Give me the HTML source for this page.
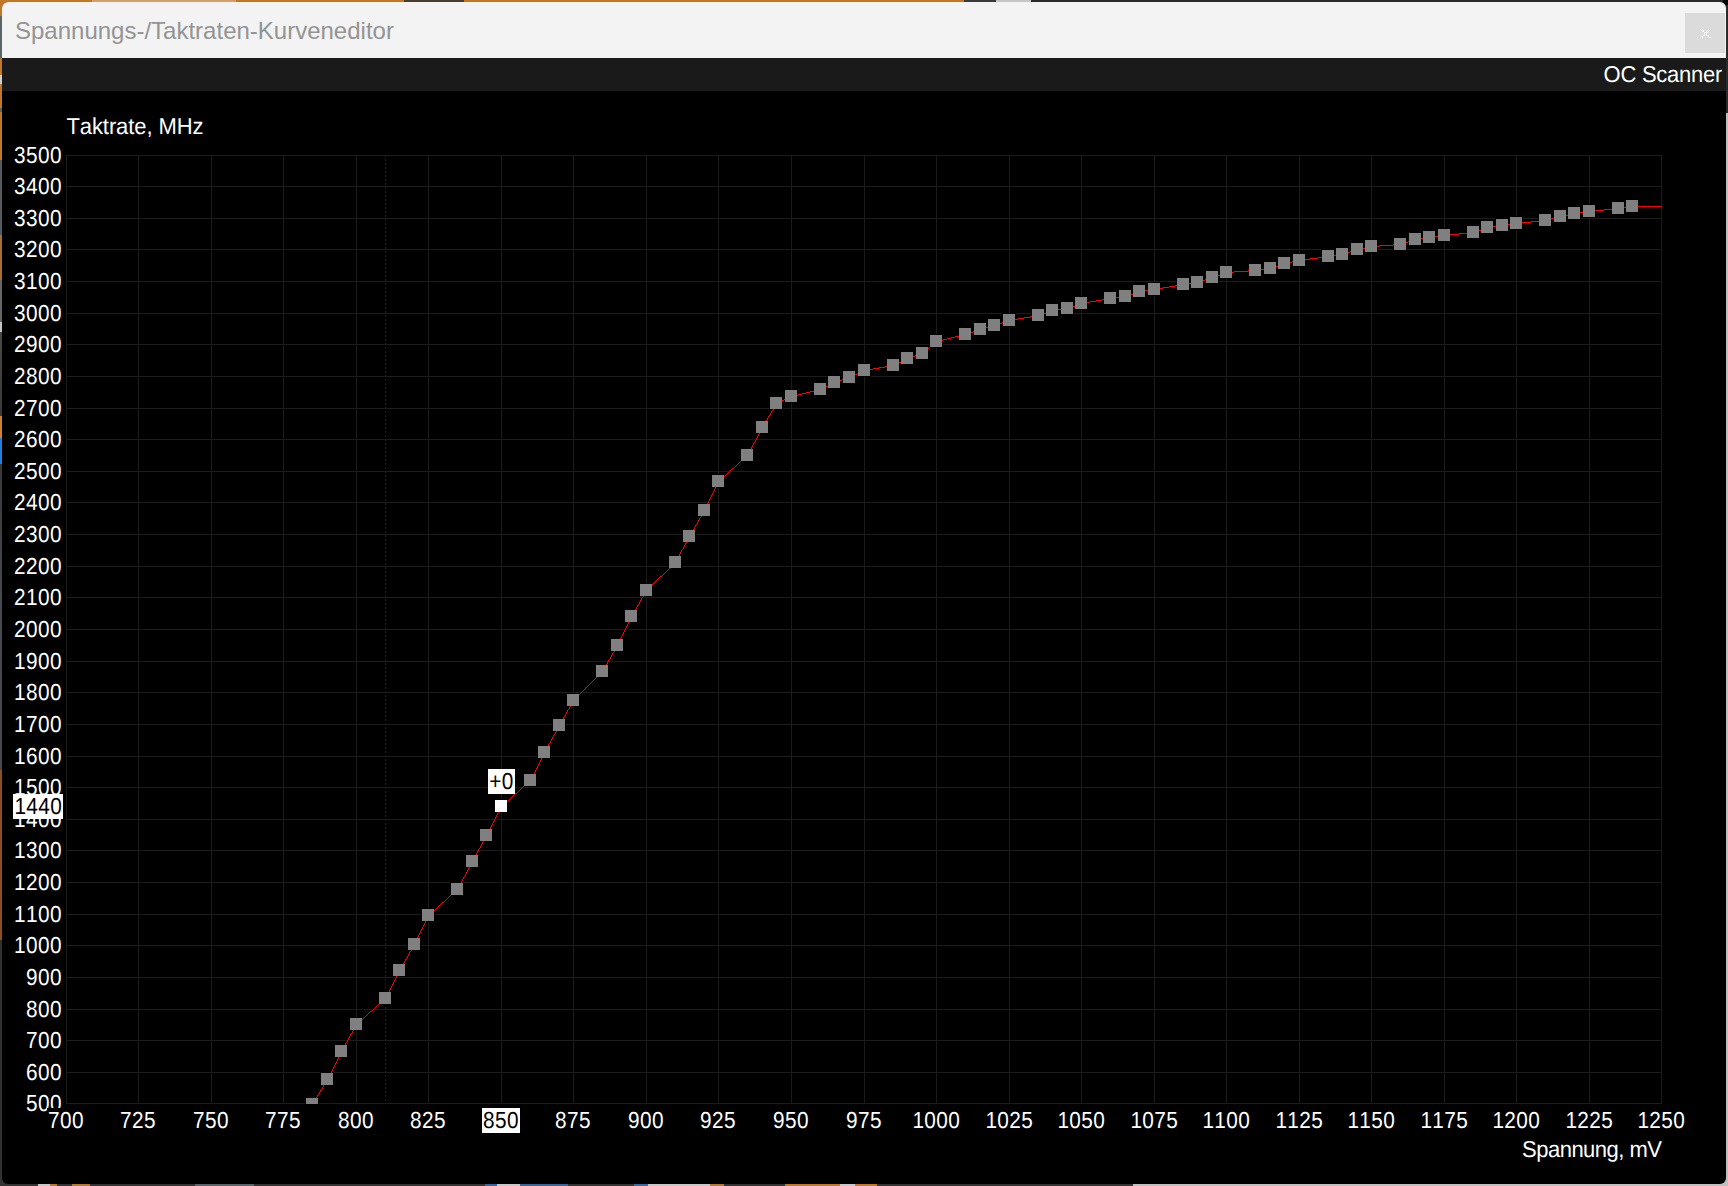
<!DOCTYPE html>
<html lang="de">
<head>
<meta charset="utf-8">
<title>Spannungs-/Taktraten-Kurveneditor</title>
<style>
html,body{margin:0;padding:0;background:#333333;}
body{width:1728px;height:1186px;overflow:hidden;position:relative;background:#333333;
font-family:"Liberation Sans",Arial,sans-serif;font-size:22px;line-height:25px;color:#fff;font-kerning:none;text-rendering:geometricPrecision;}
.s{display:block;transform:scaleY(1.056);transform-origin:0 20px;letter-spacing:-0.23px;}
.d{transform:scale(0.945,1.056);letter-spacing:0.46px;}
.yl .d{transform-origin:100% 20px;}
.xl .d,.sel .d{transform-origin:50% 20px;}
.w{transform:scaleY(1.045);}
#bg-top{position:absolute;left:0;top:0;width:1728px;height:12px;
background:linear-gradient(90deg,#c07828 0,#c07828 92px,#d2a06a 92px,#d2a06a 236px,#c07828 236px,#c07828 404px,#4a3c30 404px,#4a3c30 464px,#c07828 464px,#c07828 964px,#3a3a3a 964px,#3a3a3a 996px,#c6c6c6 996px,#c6c6c6 1031px,#2a2a2a 1031px,#2a2a2a 100%);}
#bg-left{position:absolute;left:0;top:0;width:12px;height:1186px;
background:linear-gradient(180deg,#c07828 0,#c07828 16px,#5a6468 16px,#5a6468 58px,#c07828 58px,#c07828 75px,#d0d0d0 75px,#d0d0d0 84px,#c07828 84px,#c07828 108px,#5a6468 108px,#5a6468 112px,#c07828 112px,#c07828 160px,#555a5c 160px,#555a5c 235px,#a87030 235px,#a87030 280px,#686664 280px,#686664 322px,#c4c4c4 322px,#c4c4c4 332px,#4a4846 332px,#3c3836 416px,#d08030 416px,#d08030 438px,#2080e0 438px,#2080e0 464px,#3a3836 464px,#454a50 600px,#454a50 770px,#8c4e24 770px,#8c4e24 940px,#303030 940px,#303030 100%);}
#bg-right{position:absolute;left:1716px;top:0;width:12px;height:1186px;
background:linear-gradient(180deg,#2a2a2a 0,#2a2a2a 113px,#bdbdbd 113px,#bdbdbd 100%);}
#bg-bottom{position:absolute;left:0;top:1174px;width:1728px;height:12px;
background:linear-gradient(90deg,#333 0,#333 38px,#c8c8c8 38px,#c8c8c8 50px,#b07a30 50px,#b07a30 57px,#333 57px,#333 72px,#b07a30 72px,#b07a30 90px,#333 90px,#333 195px,#5a6468 195px,#5a6468 254px,#333 254px,#333 485px,#38669a 485px,#38669a 497px,#c8c8c8 497px,#c8c8c8 520px,#38669a 520px,#38669a 568px,#333 568px,#333 634px,#3a6aa0 634px,#3a6aa0 648px,#c8c8c8 648px,#c8c8c8 710px,#b07a30 710px,#b07a30 724px,#333 724px,#333 785px,#c07828 785px,#c07828 840px,#c8c8c8 840px,#c8c8c8 855px,#c07828 855px,#c07828 877px,#333 877px,#333 1133px,#c0c0c0 1133px,#c0c0c0 100%);}
#win{position:absolute;left:2px;top:2px;width:1724px;height:1182px;border-radius:6px;background:#000;overflow:hidden;}
#titlebar{position:absolute;left:0;top:0;width:1724px;height:56px;background:#f3f3f3;}
#title{position:absolute;left:13px;top:15px;font-size:24px;line-height:28px;color:#949494;white-space:nowrap;font-kerning:normal;text-rendering:auto;}
#close{position:absolute;left:1683px;top:11px;width:40px;height:40px;background:#dbdbdb;}
#close svg{position:absolute;left:0;top:0;}
#toolbar{position:absolute;left:0;top:56px;width:1724px;height:33px;background:#1a1a1a;}
#oc{position:absolute;left:1601.6px;top:4px;white-space:nowrap;}
#chart{position:absolute;left:0;top:0;}
.t{position:absolute;white-space:nowrap;}
.yl{position:absolute;left:0;width:62px;height:25px;text-align:right;white-space:nowrap;}
.xl{position:absolute;top:1108px;height:25px;text-align:center;white-space:nowrap;background:#000;}
.sel{position:absolute;height:25px;background:#fff;color:#000;text-align:center;white-space:nowrap;}
</style>
</head>
<body>
<div id="bg-top"></div><div id="bg-left"></div><div id="bg-right"></div><div id="bg-bottom"></div>
<div style="position:absolute;left:1723px;top:0;width:5px;height:5px;background:#000"></div>
<div id="win">
<div id="titlebar"><div id="title">Spannungs-/Taktraten-Kurveneditor</div>
<div id="close"><svg width="40" height="40" viewBox="0 0 40 40"><path d="M15 16h1v1h-1zM17 16h1v1h-1zM23 16h1v1h-1zM25 16h1v1h-1zM16 17h1v1h-1zM17 17h1v1h-1zM18 17h1v1h-1zM22 17h1v1h-1zM24 17h1v1h-1zM17 18h1v1h-1zM18 18h1v1h-1zM21 18h1v1h-1zM23 18h1v1h-1zM19 19h1v1h-1zM20 19h1v1h-1zM21 19h1v1h-1zM22 19h1v1h-1zM19 20h1v1h-1zM21 20h1v1h-1zM19 21h1v1h-1zM21 21h1v1h-1zM18 22h1v1h-1zM19 22h1v1h-1zM21 22h1v1h-1zM22 22h1v1h-1zM23 22h1v1h-1zM16 23h1v1h-1zM17 23h1v1h-1zM23 23h1v1h-1zM15 24h1v1h-1zM17 24h1v1h-1zM24 24h1v1h-1zM25 24h1v1h-1z" fill="#f6f6f6" shape-rendering="crispEdges"/></svg></div></div>
<div id="toolbar"><div id="oc"><span class="s w" style="letter-spacing:-0.27px">OC Scanner</span></div></div>
</div>
<svg id="chart" width="1728" height="1186" viewBox="0 0 1728 1186" shape-rendering="crispEdges"><defs><clipPath id="cp"><rect x="66" y="155" width="1596" height="949"/></clipPath></defs><path fill="#1c1c1c" fill-rule="nonzero" d="M66 155h1v949h-1zM138 155h1v949h-1zM211 155h1v949h-1zM283 155h1v949h-1zM356 155h1v949h-1zM428 155h1v949h-1zM501 155h1v949h-1zM573 155h1v949h-1zM646 155h1v949h-1zM718 155h1v949h-1zM791 155h1v949h-1zM864 155h1v949h-1zM936 155h1v949h-1zM1009 155h1v949h-1zM1081 155h1v949h-1zM1154 155h1v949h-1zM1226 155h1v949h-1zM1299 155h1v949h-1zM1371 155h1v949h-1zM1444 155h1v949h-1zM1516 155h1v949h-1zM1589 155h1v949h-1zM1661 155h1v949h-1zM66 155h1596v1h-1596zM66 186h1596v1h-1596zM66 218h1596v1h-1596zM66 249h1596v1h-1596zM66 281h1596v1h-1596zM66 313h1596v1h-1596zM66 344h1596v1h-1596zM66 376h1596v1h-1596zM66 408h1596v1h-1596zM66 439h1596v1h-1596zM66 471h1596v1h-1596zM66 502h1596v1h-1596zM66 534h1596v1h-1596zM66 566h1596v1h-1596zM66 597h1596v1h-1596zM66 629h1596v1h-1596zM66 661h1596v1h-1596zM66 692h1596v1h-1596zM66 724h1596v1h-1596zM66 756h1596v1h-1596zM66 787h1596v1h-1596zM66 819h1596v1h-1596zM66 850h1596v1h-1596zM66 882h1596v1h-1596zM66 914h1596v1h-1596zM66 945h1596v1h-1596zM66 977h1596v1h-1596zM66 1009h1596v1h-1596zM66 1040h1596v1h-1596zM66 1072h1596v1h-1596zM66 1103h1596v1h-1596z"/><path fill="#5a0000" d="M385 155h1v2h-1zM385 159h1v2h-1zM385 163h1v2h-1zM385 167h1v2h-1zM385 171h1v2h-1zM385 175h1v2h-1zM385 179h1v2h-1zM385 183h1v2h-1zM385 187h1v2h-1zM385 191h1v2h-1zM385 195h1v2h-1zM385 199h1v2h-1zM385 203h1v2h-1zM385 207h1v2h-1zM385 211h1v2h-1zM385 215h1v2h-1zM385 219h1v2h-1zM385 223h1v2h-1zM385 227h1v2h-1zM385 231h1v2h-1zM385 235h1v2h-1zM385 239h1v2h-1zM385 243h1v2h-1zM385 247h1v2h-1zM385 251h1v2h-1zM385 255h1v2h-1zM385 259h1v2h-1zM385 263h1v2h-1zM385 267h1v2h-1zM385 271h1v2h-1zM385 275h1v2h-1zM385 279h1v2h-1zM385 283h1v2h-1zM385 287h1v2h-1zM385 291h1v2h-1zM385 295h1v2h-1zM385 299h1v2h-1zM385 303h1v2h-1zM385 307h1v2h-1zM385 311h1v2h-1zM385 315h1v2h-1zM385 319h1v2h-1zM385 323h1v2h-1zM385 327h1v2h-1zM385 331h1v2h-1zM385 335h1v2h-1zM385 339h1v2h-1zM385 343h1v2h-1zM385 347h1v2h-1zM385 351h1v2h-1zM385 355h1v2h-1zM385 359h1v2h-1zM385 363h1v2h-1zM385 367h1v2h-1zM385 371h1v2h-1zM385 375h1v2h-1zM385 379h1v2h-1zM385 383h1v2h-1zM385 387h1v2h-1zM385 391h1v2h-1zM385 395h1v2h-1zM385 399h1v2h-1zM385 403h1v2h-1zM385 407h1v2h-1zM385 411h1v2h-1zM385 415h1v2h-1zM385 419h1v2h-1zM385 423h1v2h-1zM385 427h1v2h-1zM385 431h1v2h-1zM385 435h1v2h-1zM385 439h1v2h-1zM385 443h1v2h-1zM385 447h1v2h-1zM385 451h1v2h-1zM385 455h1v2h-1zM385 459h1v2h-1zM385 463h1v2h-1zM385 467h1v2h-1zM385 471h1v2h-1zM385 475h1v2h-1zM385 479h1v2h-1zM385 483h1v2h-1zM385 487h1v2h-1zM385 491h1v2h-1zM385 495h1v2h-1zM385 499h1v2h-1zM385 503h1v2h-1zM385 507h1v2h-1zM385 511h1v2h-1zM385 515h1v2h-1zM385 519h1v2h-1zM385 523h1v2h-1zM385 527h1v2h-1zM385 531h1v2h-1zM385 535h1v2h-1zM385 539h1v2h-1zM385 543h1v2h-1zM385 547h1v2h-1zM385 551h1v2h-1zM385 555h1v2h-1zM385 559h1v2h-1zM385 563h1v2h-1zM385 567h1v2h-1zM385 571h1v2h-1zM385 575h1v2h-1zM385 579h1v2h-1zM385 583h1v2h-1zM385 587h1v2h-1zM385 591h1v2h-1zM385 595h1v2h-1zM385 599h1v2h-1zM385 603h1v2h-1zM385 607h1v2h-1zM385 611h1v2h-1zM385 615h1v2h-1zM385 619h1v2h-1zM385 623h1v2h-1zM385 627h1v2h-1zM385 631h1v2h-1zM385 635h1v2h-1zM385 639h1v2h-1zM385 643h1v2h-1zM385 647h1v2h-1zM385 651h1v2h-1zM385 655h1v2h-1zM385 659h1v2h-1zM385 663h1v2h-1zM385 667h1v2h-1zM385 671h1v2h-1zM385 675h1v2h-1zM385 679h1v2h-1zM385 683h1v2h-1zM385 687h1v2h-1zM385 691h1v2h-1zM385 695h1v2h-1zM385 699h1v2h-1zM385 703h1v2h-1zM385 707h1v2h-1zM385 711h1v2h-1zM385 715h1v2h-1zM385 719h1v2h-1zM385 723h1v2h-1zM385 727h1v2h-1zM385 731h1v2h-1zM385 735h1v2h-1zM385 739h1v2h-1zM385 743h1v2h-1zM385 747h1v2h-1zM385 751h1v2h-1zM385 755h1v2h-1zM385 759h1v2h-1zM385 763h1v2h-1zM385 767h1v2h-1zM385 771h1v2h-1zM385 775h1v2h-1zM385 779h1v2h-1zM385 783h1v2h-1zM385 787h1v2h-1zM385 791h1v2h-1zM385 795h1v2h-1zM385 799h1v2h-1zM385 803h1v2h-1zM385 807h1v2h-1zM385 811h1v2h-1zM385 815h1v2h-1zM385 819h1v2h-1zM385 823h1v2h-1zM385 827h1v2h-1zM385 831h1v2h-1zM385 835h1v2h-1zM385 839h1v2h-1zM385 843h1v2h-1zM385 847h1v2h-1zM385 851h1v2h-1zM385 855h1v2h-1zM385 859h1v2h-1zM385 863h1v2h-1zM385 867h1v2h-1zM385 871h1v2h-1zM385 875h1v2h-1zM385 879h1v2h-1zM385 883h1v2h-1zM385 887h1v2h-1zM385 891h1v2h-1zM385 895h1v2h-1zM385 899h1v2h-1zM385 903h1v2h-1zM385 907h1v2h-1zM385 911h1v2h-1zM385 915h1v2h-1zM385 919h1v2h-1zM385 923h1v2h-1zM385 927h1v2h-1zM385 931h1v2h-1zM385 935h1v2h-1zM385 939h1v2h-1zM385 943h1v2h-1zM385 947h1v2h-1zM385 951h1v2h-1zM385 955h1v2h-1zM385 959h1v2h-1zM385 963h1v2h-1zM385 967h1v2h-1zM385 971h1v2h-1zM385 975h1v2h-1zM385 979h1v2h-1zM385 983h1v2h-1zM385 987h1v2h-1zM385 991h1v2h-1zM385 995h1v2h-1zM385 999h1v2h-1zM385 1003h1v2h-1zM385 1007h1v2h-1zM385 1011h1v2h-1zM385 1015h1v2h-1zM385 1019h1v2h-1zM385 1023h1v2h-1zM385 1027h1v2h-1zM385 1031h1v2h-1zM385 1035h1v2h-1zM385 1039h1v2h-1zM385 1043h1v2h-1zM385 1047h1v2h-1zM385 1051h1v2h-1zM385 1055h1v2h-1zM385 1059h1v2h-1zM385 1063h1v2h-1zM385 1067h1v2h-1zM385 1071h1v2h-1zM385 1075h1v2h-1zM385 1079h1v2h-1zM385 1083h1v2h-1zM385 1087h1v2h-1zM385 1091h1v2h-1zM385 1095h1v2h-1zM385 1099h1v2h-1zM385 1103h1v1h-1z"/><g clip-path="url(#cp)"><path fill="#000000" d="M305 1097h14v14h-14zM320 1072h14v14h-14zM334 1044h14v14h-14zM349 1017h14v14h-14zM378 991h14v14h-14zM392 963h14v14h-14zM407 937h14v14h-14zM421 908h14v14h-14zM450 882h14v14h-14zM465 854h14v14h-14zM479 828h14v14h-14zM494 799h14v14h-14zM523 773h14v14h-14zM537 745h14v14h-14zM552 718h14v14h-14zM566 693h14v14h-14zM595 664h14v14h-14zM610 638h14v14h-14zM624 609h14v14h-14zM639 583h14v14h-14zM668 555h14v14h-14zM682 529h14v14h-14zM697 503h14v14h-14zM711 474h14v14h-14zM740 448h14v14h-14zM755 420h14v14h-14zM769 396h14v14h-14zM784 389h14v14h-14zM813 382h14v14h-14zM827 375h14v14h-14zM842 370h14v14h-14zM857 363h14v14h-14zM886 358h14v14h-14zM900 351h14v14h-14zM915 346h14v14h-14zM929 334h14v14h-14zM958 327h14v14h-14zM973 322h14v14h-14zM987 318h14v14h-14zM1002 313h14v14h-14zM1031 308h14v14h-14zM1045 303h14v14h-14zM1060 301h14v14h-14zM1074 296h14v14h-14zM1103 291h14v14h-14zM1118 289h14v14h-14zM1132 284h14v14h-14zM1147 282h14v14h-14zM1176 277h14v14h-14zM1190 275h14v14h-14zM1205 270h14v14h-14zM1219 265h14v14h-14zM1248 263h14v14h-14zM1263 261h14v14h-14zM1277 256h14v14h-14zM1292 253h14v14h-14zM1321 249h14v14h-14zM1335 247h14v14h-14zM1350 242h14v14h-14zM1364 239h14v14h-14zM1393 237h14v14h-14zM1408 232h14v14h-14zM1422 230h14v14h-14zM1437 228h14v14h-14zM1466 225h14v14h-14zM1480 220h14v14h-14zM1495 218h14v14h-14zM1509 216h14v14h-14zM1538 213h14v14h-14zM1553 209h14v14h-14zM1567 206h14v14h-14zM1582 204h14v14h-14zM1611 201h14v14h-14zM1625 199h14v14h-14z"/><path fill="#ff0000" d="M313 1102h1v2h-1zM314 1100h1v2h-1zM315 1099h1v1h-1zM316 1097h1v2h-1zM317 1095h1v2h-1zM318 1094h1v1h-1zM319 1092h1v2h-1zM320 1090h1v2h-1zM321 1089h1v1h-1zM322 1087h1v2h-1zM323 1085h1v2h-1zM324 1084h1v1h-1zM325 1082h1v2h-1zM326 1080h1v2h-1zM327 1079h1v1h-1zM328 1077h1v2h-1zM329 1075h1v2h-1zM330 1073h1v2h-1zM331 1071h1v2h-1zM332 1069h1v2h-1zM333 1067h1v2h-1zM334 1065h1v2h-1zM335 1063h1v2h-1zM336 1061h1v2h-1zM337 1059h1v2h-1zM338 1057h1v2h-1zM339 1055h1v2h-1zM340 1053h1v2h-1zM341 1051h1v2h-1zM342 1049h1v2h-1zM343 1047h1v2h-1zM344 1045h1v2h-1zM345 1043h1v2h-1zM346 1042h1v1h-1zM347 1040h1v2h-1zM348 1038h1v2h-1zM349 1036h1v2h-1zM350 1034h1v2h-1zM351 1033h1v1h-1zM352 1031h1v2h-1zM353 1029h1v2h-1zM354 1027h1v2h-1zM355 1025h1v2h-1zM356 1024h1v1h-1zM357 1023h1v1h-1zM358 1022h1v1h-1zM359 1021h1v1h-1zM360 1020h2v1h-2zM362 1019h1v1h-1zM363 1018h1v1h-1zM364 1017h1v1h-1zM365 1016h1v1h-1zM366 1015h1v1h-1zM367 1014h1v1h-1zM368 1013h1v1h-1zM369 1012h1v1h-1zM370 1011h2v1h-2zM372 1010h1v1h-1zM373 1009h1v1h-1zM374 1008h1v1h-1zM375 1007h1v1h-1zM376 1006h1v1h-1zM377 1005h1v1h-1zM378 1004h1v1h-1zM379 1003h1v1h-1zM380 1002h2v1h-2zM382 1001h1v1h-1zM383 1000h1v1h-1zM384 999h1v1h-1zM385 998h1v1h-1zM386 996h1v2h-1zM387 994h1v2h-1zM388 992h1v2h-1zM389 990h1v2h-1zM390 988h1v2h-1zM391 986h1v2h-1zM392 984h1v2h-1zM393 982h1v2h-1zM394 980h1v2h-1zM395 978h1v2h-1zM396 976h1v2h-1zM397 974h1v2h-1zM398 972h1v2h-1zM399 970h1v2h-1zM400 968h1v2h-1zM401 966h1v2h-1zM402 964h1v2h-1zM403 963h1v1h-1zM404 961h1v2h-1zM405 959h1v2h-1zM406 958h1v1h-1zM407 956h1v2h-1zM408 954h1v2h-1zM409 952h1v2h-1zM410 951h1v1h-1zM411 949h1v2h-1zM412 947h1v2h-1zM413 945h1v2h-1zM414 943h1v2h-1zM415 941h1v2h-1zM416 939h1v2h-1zM417 937h1v2h-1zM418 935h1v2h-1zM419 933h1v2h-1zM420 931h1v2h-1zM421 929h1v2h-1zM422 927h1v2h-1zM423 925h1v2h-1zM424 923h1v2h-1zM425 921h1v2h-1zM426 919h1v2h-1zM427 917h1v2h-1zM428 915h1v2h-1zM429 914h1v1h-1zM430 913h1v1h-1zM431 912h1v1h-1zM432 911h2v1h-2zM434 910h1v1h-1zM435 909h1v1h-1zM436 908h1v1h-1zM437 907h1v1h-1zM438 906h1v1h-1zM439 905h1v1h-1zM440 904h1v1h-1zM441 903h1v1h-1zM442 902h2v1h-2zM444 901h1v1h-1zM445 900h1v1h-1zM446 899h1v1h-1zM447 898h1v1h-1zM448 897h1v1h-1zM449 896h1v1h-1zM450 895h1v1h-1zM451 894h1v1h-1zM452 893h2v1h-2zM454 892h1v1h-1zM455 891h1v1h-1zM456 890h1v1h-1zM457 889h1v1h-1zM458 887h1v2h-1zM459 885h1v2h-1zM460 883h1v2h-1zM461 881h1v2h-1zM462 879h1v2h-1zM463 877h1v2h-1zM464 876h1v1h-1zM465 874h1v2h-1zM466 872h1v2h-1zM467 870h1v2h-1zM468 868h1v2h-1zM469 866h1v2h-1zM470 864h1v2h-1zM471 862h1v2h-1zM472 861h1v1h-1zM473 859h1v2h-1zM474 857h1v2h-1zM475 855h1v2h-1zM476 853h1v2h-1zM477 851h1v2h-1zM478 849h1v2h-1zM479 848h1v1h-1zM480 846h1v2h-1zM481 844h1v2h-1zM482 842h1v2h-1zM483 840h1v2h-1zM484 838h1v2h-1zM485 836h1v2h-1zM486 835h1v1h-1zM487 833h1v2h-1zM488 831h1v2h-1zM489 829h1v2h-1zM490 827h1v2h-1zM491 825h1v2h-1zM492 823h1v2h-1zM493 821h1v2h-1zM494 819h1v2h-1zM495 817h1v2h-1zM496 815h1v2h-1zM497 813h1v2h-1zM498 811h1v2h-1zM499 809h1v2h-1zM500 807h1v2h-1zM501 806h1v1h-1zM502 805h1v1h-1zM503 804h1v1h-1zM504 803h1v1h-1zM505 802h2v1h-2zM507 801h1v1h-1zM508 800h1v1h-1zM509 799h1v1h-1zM510 798h1v1h-1zM511 797h1v1h-1zM512 796h1v1h-1zM513 795h1v1h-1zM514 794h1v1h-1zM515 793h2v1h-2zM517 792h1v1h-1zM518 791h1v1h-1zM519 790h1v1h-1zM520 789h1v1h-1zM521 788h1v1h-1zM522 787h1v1h-1zM523 786h1v1h-1zM524 785h1v1h-1zM525 784h2v1h-2zM527 783h1v1h-1zM528 782h1v1h-1zM529 781h1v1h-1zM530 780h1v1h-1zM531 778h1v2h-1zM532 776h1v2h-1zM533 774h1v2h-1zM534 772h1v2h-1zM535 770h1v2h-1zM536 768h1v2h-1zM537 766h1v2h-1zM538 764h1v2h-1zM539 762h1v2h-1zM540 760h1v2h-1zM541 758h1v2h-1zM542 756h1v2h-1zM543 754h1v2h-1zM544 752h1v2h-1zM545 750h1v2h-1zM546 748h1v2h-1zM547 746h1v2h-1zM548 744h1v2h-1zM549 743h1v1h-1zM550 741h1v2h-1zM551 739h1v2h-1zM552 737h1v2h-1zM553 735h1v2h-1zM554 734h1v1h-1zM555 732h1v2h-1zM556 730h1v2h-1zM557 728h1v2h-1zM558 726h1v2h-1zM559 725h1v1h-1zM560 723h1v2h-1zM561 721h1v2h-1zM562 719h1v2h-1zM563 717h1v2h-1zM564 716h1v1h-1zM565 714h1v2h-1zM566 712h1v2h-1zM567 710h1v2h-1zM568 709h1v1h-1zM569 707h1v2h-1zM570 705h1v2h-1zM571 703h1v2h-1zM572 701h1v2h-1zM573 700h1v1h-1zM574 699h1v1h-1zM575 698h1v1h-1zM576 697h1v1h-1zM577 696h1v1h-1zM578 695h1v1h-1zM579 694h1v1h-1zM580 693h1v1h-1zM581 692h1v1h-1zM582 691h1v1h-1zM583 690h1v1h-1zM584 689h1v1h-1zM585 688h1v1h-1zM586 687h1v1h-1zM587 686h1v1h-1zM588 685h1v1h-1zM589 684h1v1h-1zM590 683h1v1h-1zM591 682h1v1h-1zM592 681h1v1h-1zM593 680h1v1h-1zM594 679h1v1h-1zM595 678h1v1h-1zM596 677h1v1h-1zM597 676h1v1h-1zM598 675h1v1h-1zM599 674h1v1h-1zM600 673h1v1h-1zM601 672h1v1h-1zM602 671h1v1h-1zM603 669h1v2h-1zM604 667h1v2h-1zM605 665h1v2h-1zM606 664h1v1h-1zM607 662h1v2h-1zM608 660h1v2h-1zM609 659h1v1h-1zM610 657h1v2h-1zM611 655h1v2h-1zM612 653h1v2h-1zM613 652h1v1h-1zM614 650h1v2h-1zM615 648h1v2h-1zM616 646h1v2h-1zM617 644h1v2h-1zM618 642h1v2h-1zM619 640h1v2h-1zM620 638h1v2h-1zM621 636h1v2h-1zM622 634h1v2h-1zM623 632h1v2h-1zM624 630h1v2h-1zM625 628h1v2h-1zM626 626h1v2h-1zM627 624h1v2h-1zM628 622h1v2h-1zM629 620h1v2h-1zM630 618h1v2h-1zM631 616h1v2h-1zM632 614h1v2h-1zM633 612h1v2h-1zM634 610h1v2h-1zM635 609h1v1h-1zM636 607h1v2h-1zM637 605h1v2h-1zM638 604h1v1h-1zM639 602h1v2h-1zM640 600h1v2h-1zM641 598h1v2h-1zM642 597h1v1h-1zM643 595h1v2h-1zM644 593h1v2h-1zM645 591h1v2h-1zM646 590h1v1h-1zM647 589h1v1h-1zM648 588h1v1h-1zM649 587h1v1h-1zM650 586h1v1h-1zM651 585h1v1h-1zM652 584h1v1h-1zM653 583h1v1h-1zM654 582h1v1h-1zM655 581h1v1h-1zM656 580h1v1h-1zM657 579h1v1h-1zM658 578h1v1h-1zM659 577h1v1h-1zM660 576h2v1h-2zM662 575h1v1h-1zM663 574h1v1h-1zM664 573h1v1h-1zM665 572h1v1h-1zM666 571h1v1h-1zM667 570h1v1h-1zM668 569h1v1h-1zM669 568h1v1h-1zM670 567h1v1h-1zM671 566h1v1h-1zM672 565h1v1h-1zM673 564h1v1h-1zM674 563h1v1h-1zM675 562h1v1h-1zM676 560h1v2h-1zM677 558h1v2h-1zM678 556h1v2h-1zM679 554h1v2h-1zM680 552h1v2h-1zM681 550h1v2h-1zM682 549h1v1h-1zM683 547h1v2h-1zM684 545h1v2h-1zM685 543h1v2h-1zM686 541h1v2h-1zM687 539h1v2h-1zM688 537h1v2h-1zM689 536h1v1h-1zM690 534h1v2h-1zM691 532h1v2h-1zM692 530h1v2h-1zM693 529h1v1h-1zM694 527h1v2h-1zM695 525h1v2h-1zM696 524h1v1h-1zM697 522h1v2h-1zM698 520h1v2h-1zM699 518h1v2h-1zM700 517h1v1h-1zM701 515h1v2h-1zM702 513h1v2h-1zM703 511h1v2h-1zM704 509h1v2h-1zM705 507h1v2h-1zM706 505h1v2h-1zM707 503h1v2h-1zM708 501h1v2h-1zM709 499h1v2h-1zM710 497h1v2h-1zM711 495h1v2h-1zM712 493h1v2h-1zM713 491h1v2h-1zM714 489h1v2h-1zM715 487h1v2h-1zM716 485h1v2h-1zM717 483h1v2h-1zM718 481h1v2h-1zM719 480h1v1h-1zM720 479h1v1h-1zM721 478h1v1h-1zM722 477h2v1h-2zM724 476h1v1h-1zM725 475h1v1h-1zM726 474h1v1h-1zM727 473h1v1h-1zM728 472h1v1h-1zM729 471h1v1h-1zM730 470h1v1h-1zM731 469h1v1h-1zM732 468h2v1h-2zM734 467h1v1h-1zM735 466h1v1h-1zM736 465h1v1h-1zM737 464h1v1h-1zM738 463h1v1h-1zM739 462h1v1h-1zM740 461h1v1h-1zM741 460h1v1h-1zM742 459h2v1h-2zM744 458h1v1h-1zM745 457h1v1h-1zM746 456h1v1h-1zM747 455h1v1h-1zM748 453h1v2h-1zM749 451h1v2h-1zM750 449h1v2h-1zM751 447h1v2h-1zM752 445h1v2h-1zM753 443h1v2h-1zM754 442h1v1h-1zM755 440h1v2h-1zM756 438h1v2h-1zM757 436h1v2h-1zM758 434h1v2h-1zM759 432h1v2h-1zM760 430h1v2h-1zM761 428h1v2h-1zM762 427h1v1h-1zM763 425h1v2h-1zM764 423h1v2h-1zM765 422h1v1h-1zM766 420h1v2h-1zM767 418h1v2h-1zM768 416h1v2h-1zM769 415h1v1h-1zM770 413h1v2h-1zM771 411h1v2h-1zM772 410h1v1h-1zM773 408h1v2h-1zM774 406h1v2h-1zM775 404h1v2h-1zM776 403h2v1h-2zM778 402h2v1h-2zM780 401h2v1h-2zM782 400h2v1h-2zM784 399h2v1h-2zM786 398h2v1h-2zM788 397h2v1h-2zM790 396h4v1h-4zM794 395h4v1h-4zM798 394h4v1h-4zM802 393h4v1h-4zM806 392h4v1h-4zM810 391h4v1h-4zM814 390h4v1h-4zM818 389h4v1h-4zM822 388h2v1h-2zM824 387h2v1h-2zM826 386h2v1h-2zM828 385h2v1h-2zM830 384h2v1h-2zM832 383h2v1h-2zM834 382h2v1h-2zM836 381h3v1h-3zM839 380h3v1h-3zM842 379h3v1h-3zM845 378h3v1h-3zM848 377h3v1h-3zM851 376h2v1h-2zM853 375h2v1h-2zM855 374h2v1h-2zM857 373h2v1h-2zM859 372h2v1h-2zM861 371h2v1h-2zM863 370h4v1h-4zM867 369h6v1h-6zM873 368h6v1h-6zM879 367h6v1h-6zM885 366h6v1h-6zM891 365h4v1h-4zM895 364h2v1h-2zM897 363h2v1h-2zM899 362h2v1h-2zM901 361h2v1h-2zM903 360h2v1h-2zM905 359h2v1h-2zM907 358h2v1h-2zM909 357h3v1h-3zM912 356h3v1h-3zM915 355h3v1h-3zM918 354h3v1h-3zM921 353h2v1h-2zM923 352h1v1h-1zM924 351h1v1h-1zM925 350h2v1h-2zM927 349h1v1h-1zM928 348h1v1h-1zM929 347h1v1h-1zM930 346h1v1h-1zM931 345h1v1h-1zM932 344h2v1h-2zM934 343h1v1h-1zM935 342h1v1h-1zM936 341h3v1h-3zM939 340h4v1h-4zM943 339h4v1h-4zM947 338h4v1h-4zM951 337h4v1h-4zM955 336h4v1h-4zM959 335h4v1h-4zM963 334h4v1h-4zM967 333h3v1h-3zM970 332h3v1h-3zM973 331h3v1h-3zM976 330h3v1h-3zM979 329h3v1h-3zM982 328h4v1h-4zM986 327h3v1h-3zM989 326h4v1h-4zM993 325h3v1h-3zM996 324h3v1h-3zM999 323h3v1h-3zM1002 322h3v1h-3zM1005 321h3v1h-3zM1008 320h4v1h-4zM1012 319h6v1h-6zM1018 318h6v1h-6zM1024 317h6v1h-6zM1030 316h6v1h-6zM1036 315h4v1h-4zM1040 314h3v1h-3zM1043 313h3v1h-3zM1046 312h2v1h-2zM1048 311h3v1h-3zM1051 310h5v1h-5zM1056 309h8v1h-8zM1064 308h5v1h-5zM1069 307h3v1h-3zM1072 306h3v1h-3zM1075 305h2v1h-2zM1077 304h3v1h-3zM1080 303h4v1h-4zM1084 302h6v1h-6zM1090 301h6v1h-6zM1096 300h6v1h-6zM1102 299h6v1h-6zM1108 298h6v1h-6zM1114 297h8v1h-8zM1122 296h5v1h-5zM1127 295h3v1h-3zM1130 294h3v1h-3zM1133 293h2v1h-2zM1135 292h3v1h-3zM1138 291h5v1h-5zM1143 290h8v1h-8zM1151 289h6v1h-6zM1157 288h6v1h-6zM1163 287h6v1h-6zM1169 286h6v1h-6zM1175 285h6v1h-6zM1181 284h6v1h-6zM1187 283h7v1h-7zM1194 282h5v1h-5zM1199 281h3v1h-3zM1202 280h3v1h-3zM1205 279h3v1h-3zM1208 278h3v1h-3zM1211 277h3v1h-3zM1214 276h3v1h-3zM1217 275h3v1h-3zM1220 274h2v1h-2zM1222 273h3v1h-3zM1225 272h9v1h-9zM1234 271h14v1h-14zM1248 270h11v1h-11zM1259 269h8v1h-8zM1267 268h5v1h-5zM1272 267h3v1h-3zM1275 266h3v1h-3zM1278 265h2v1h-2zM1280 264h3v1h-3zM1283 263h4v1h-4zM1287 262h5v1h-5zM1292 261h5v1h-5zM1297 260h6v1h-6zM1303 259h7v1h-7zM1310 258h8v1h-8zM1318 257h7v1h-7zM1325 256h7v1h-7zM1332 255h7v1h-7zM1339 254h5v1h-5zM1344 253h3v1h-3zM1347 252h3v1h-3zM1350 251h3v1h-3zM1353 250h3v1h-3zM1356 249h4v1h-4zM1360 248h5v1h-5zM1365 247h4v1h-4zM1369 246h10v1h-10zM1379 245h14v1h-14zM1393 244h9v1h-9zM1402 243h3v1h-3zM1405 242h3v1h-3zM1408 241h3v1h-3zM1411 240h3v1h-3zM1414 239h5v1h-5zM1419 238h7v1h-7zM1426 237h7v1h-7zM1433 236h8v1h-8zM1441 235h8v1h-8zM1449 234h10v1h-10zM1459 233h10v1h-10zM1469 232h6v1h-6zM1475 231h3v1h-3zM1478 230h3v1h-3zM1481 229h2v1h-2zM1483 228h3v1h-3zM1486 227h5v1h-5zM1491 226h8v1h-8zM1499 225h7v1h-7zM1506 224h7v1h-7zM1513 223h8v1h-8zM1521 222h10v1h-10zM1531 221h10v1h-10zM1541 220h6v1h-6zM1547 219h4v1h-4zM1551 218h4v1h-4zM1555 217h4v1h-4zM1559 216h4v1h-4zM1563 215h5v1h-5zM1568 214h4v1h-4zM1572 213h6v1h-6zM1578 212h8v1h-8zM1586 211h8v1h-8zM1594 210h10v1h-10zM1604 209h10v1h-10zM1614 208h8v1h-8zM1622 207h7v1h-7zM1629 206h33v1h-33z"/><path fill="#808080" d="M306 1098h12v12h-12zM321 1073h12v12h-12zM335 1045h12v12h-12zM350 1018h12v12h-12zM379 992h12v12h-12zM393 964h12v12h-12zM408 938h12v12h-12zM422 909h12v12h-12zM451 883h12v12h-12zM466 855h12v12h-12zM480 829h12v12h-12zM524 774h12v12h-12zM538 746h12v12h-12zM553 719h12v12h-12zM567 694h12v12h-12zM596 665h12v12h-12zM611 639h12v12h-12zM625 610h12v12h-12zM640 584h12v12h-12zM669 556h12v12h-12zM683 530h12v12h-12zM698 504h12v12h-12zM712 475h12v12h-12zM741 449h12v12h-12zM756 421h12v12h-12zM770 397h12v12h-12zM785 390h12v12h-12zM814 383h12v12h-12zM828 376h12v12h-12zM843 371h12v12h-12zM858 364h12v12h-12zM887 359h12v12h-12zM901 352h12v12h-12zM916 347h12v12h-12zM930 335h12v12h-12zM959 328h12v12h-12zM974 323h12v12h-12zM988 319h12v12h-12zM1003 314h12v12h-12zM1032 309h12v12h-12zM1046 304h12v12h-12zM1061 302h12v12h-12zM1075 297h12v12h-12zM1104 292h12v12h-12zM1119 290h12v12h-12zM1133 285h12v12h-12zM1148 283h12v12h-12zM1177 278h12v12h-12zM1191 276h12v12h-12zM1206 271h12v12h-12zM1220 266h12v12h-12zM1249 264h12v12h-12zM1264 262h12v12h-12zM1278 257h12v12h-12zM1293 254h12v12h-12zM1322 250h12v12h-12zM1336 248h12v12h-12zM1351 243h12v12h-12zM1365 240h12v12h-12zM1394 238h12v12h-12zM1409 233h12v12h-12zM1423 231h12v12h-12zM1438 229h12v12h-12zM1467 226h12v12h-12zM1481 221h12v12h-12zM1496 219h12v12h-12zM1510 217h12v12h-12zM1539 214h12v12h-12zM1554 210h12v12h-12zM1568 207h12v12h-12zM1583 205h12v12h-12zM1612 202h12v12h-12zM1626 200h12v12h-12z"/><rect x="495" y="800" width="12" height="12" fill="#ffffff"/></g></svg>
<div class="t" style="left:66.5px;top:114px"><span class="s w" style="letter-spacing:-0.1px">Taktrate, MHz</span></div>
<div class="yl" style="top:143px"><span class="s d">3500</span></div><div class="yl" style="top:174px"><span class="s d">3400</span></div><div class="yl" style="top:206px"><span class="s d">3300</span></div><div class="yl" style="top:237px"><span class="s d">3200</span></div><div class="yl" style="top:269px"><span class="s d">3100</span></div><div class="yl" style="top:301px"><span class="s d">3000</span></div><div class="yl" style="top:332px"><span class="s d">2900</span></div><div class="yl" style="top:364px"><span class="s d">2800</span></div><div class="yl" style="top:396px"><span class="s d">2700</span></div><div class="yl" style="top:427px"><span class="s d">2600</span></div><div class="yl" style="top:459px"><span class="s d">2500</span></div><div class="yl" style="top:490px"><span class="s d">2400</span></div><div class="yl" style="top:522px"><span class="s d">2300</span></div><div class="yl" style="top:554px"><span class="s d">2200</span></div><div class="yl" style="top:585px"><span class="s d">2100</span></div><div class="yl" style="top:617px"><span class="s d">2000</span></div><div class="yl" style="top:649px"><span class="s d">1900</span></div><div class="yl" style="top:680px"><span class="s d">1800</span></div><div class="yl" style="top:712px"><span class="s d">1700</span></div><div class="yl" style="top:744px"><span class="s d">1600</span></div><div class="yl" style="top:775px"><span class="s d">1500</span></div><div class="yl" style="top:807px"><span class="s d">1400</span></div><div class="yl" style="top:838px"><span class="s d">1300</span></div><div class="yl" style="top:870px"><span class="s d">1200</span></div><div class="yl" style="top:902px"><span class="s d">1100</span></div><div class="yl" style="top:933px"><span class="s d">1000</span></div><div class="yl" style="top:965px"><span class="s d">900</span></div><div class="yl" style="top:997px"><span class="s d">800</span></div><div class="yl" style="top:1028px"><span class="s d">700</span></div><div class="yl" style="top:1060px"><span class="s d">600</span></div><div class="yl" style="top:1091px"><span class="s d">500</span></div><div class="xl" style="left:47px;width:38px"><span class="s d">700</span></div><div class="xl" style="left:119px;width:38px"><span class="s d">725</span></div><div class="xl" style="left:192px;width:38px"><span class="s d">750</span></div><div class="xl" style="left:264px;width:38px"><span class="s d">775</span></div><div class="xl" style="left:337px;width:38px"><span class="s d">800</span></div><div class="xl" style="left:409px;width:38px"><span class="s d">825</span></div><div class="xl" style="left:554px;width:38px"><span class="s d">875</span></div><div class="xl" style="left:627px;width:38px"><span class="s d">900</span></div><div class="xl" style="left:699px;width:38px"><span class="s d">925</span></div><div class="xl" style="left:772px;width:38px"><span class="s d">950</span></div><div class="xl" style="left:845px;width:38px"><span class="s d">975</span></div><div class="xl" style="left:911px;width:50px"><span class="s d">1000</span></div><div class="xl" style="left:984px;width:50px"><span class="s d">1025</span></div><div class="xl" style="left:1056px;width:50px"><span class="s d">1050</span></div><div class="xl" style="left:1129px;width:50px"><span class="s d">1075</span></div><div class="xl" style="left:1201px;width:50px"><span class="s d">1100</span></div><div class="xl" style="left:1274px;width:50px"><span class="s d">1125</span></div><div class="xl" style="left:1346px;width:50px"><span class="s d">1150</span></div><div class="xl" style="left:1419px;width:50px"><span class="s d">1175</span></div><div class="xl" style="left:1491px;width:50px"><span class="s d">1200</span></div><div class="xl" style="left:1564px;width:50px"><span class="s d">1225</span></div><div class="xl" style="left:1636px;width:50px"><span class="s d">1250</span></div>
<div class="sel" style="left:13px;top:794px;width:50px"><span class="s d">1440</span></div>
<div class="sel" style="left:482px;top:1108px;width:38px"><span class="s d">850</span></div>
<div class="sel" style="left:488px;top:769px;width:27px"><span class="s d">+0</span></div>
<div class="t" style="left:1522px;top:1137px"><span class="s w" style="letter-spacing:-0.5px">Spannung, mV</span></div>
</body>
</html>
